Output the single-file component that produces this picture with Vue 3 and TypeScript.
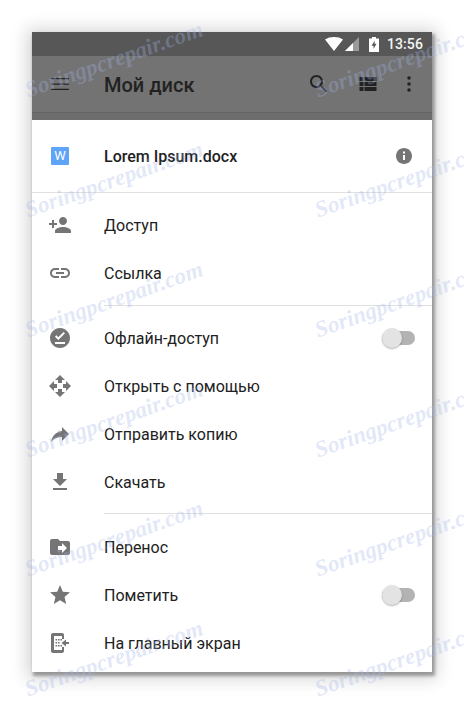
<script setup lang="ts">
const fileMenuA = [
  { label: 'Доступ', d: 'M15 12c2.21 0 4-1.79 4-4s-1.79-4-4-4-4 1.79-4 4 1.79 4 4 4zm-9-2V7H4v3H1v2h3v3h2v-3h3v-2H6zm9 4c-2.67 0-8 1.34-8 4v2h16v-2c0-2.66-5.33-4-8-4z' },
  { label: 'Ссылка', d: 'M3.9 12c0-1.71 1.39-3.1 3.1-3.1h4V7H7c-2.76 0-5 2.24-5 5s2.24 5 5 5h4v-1.9H7c-1.71 0-3.1-1.39-3.1-3.1zM8 13h8v-2H8v2zm9-6h-4v1.9h4c1.71 0 3.1 1.39 3.1 3.1s-1.39 3.1-3.1 3.1h-4V17h4c2.76 0 5-2.24 5-5s-2.24-5-5-5z' },
]
const fileMenuB = [
  { label: 'Офлайн-доступ', toggle: true, d: 'M12 2C6.5 2 2 6.5 2 12s4.5 10 10 10 10-4.5 10-10S17.5 2 12 2zm5 16H7v-2h10v2zm-6.7-4L7 10.7l1.4-1.4 1.9 1.9 5.3-5.3L17 7.3 10.3 14z' },
  { label: 'Открыть с помощью', toggle: false, d: 'M10 9h4V6h3l-5-5-5 5h3v3zm-1 1H6V7l-5 5 5 5v-3h3v-4zm14 2l-5-5v3h-3v4h3v3l5-5zm-9 3h-4v3H7l5 5 5-5h-3v-3z' },
  { label: 'Отправить копию', toggle: false, d: 'M14 9V5l7 7-7 7v-4.1c-5 0-8.5 1.6-11 5.1 1-5 4-10 11-11z' },
  { label: 'Скачать', toggle: false, d: 'M19 9h-4V3H9v6H5l7 7 7-7zM5 18v2h14v-2H5z' },
]
const fileMenuC = [
  { label: 'Перенос', toggle: false, d: 'M20 6h-8l-2-2H4c-1.1 0-2 .9-2 2v12c0 1.1.9 2 2 2h16c1.1 0 2-.9 2-2V8c0-1.1-.9-2-2-2zm-6 12v-3h-4v-4h4V8l5 5-5 5z' },
  { label: 'Пометить', toggle: true, d: 'M12 17.27L18.18 21l-1.64-7.03L22 9.24l-7.19-.61L12 2 9.19 8.63 2 9.24l5.46 4.73L5.82 21z' },
  { label: 'На главный экран', toggle: false, d: 'M5 2h9c1.100 0 2 .9 2 2v4h-2V5H6v14h8v-3h2v4c0 1.100-.9 2-2 2H5c-1.100 0-2-.9-2-2V4c0-1.100.9-2 2-2zm2.500 6h1.600v1.600H7.500zm2.500 0h1.600v1.600H10zm2.500 0h1.600v1.600h-1.600zM7.500 11h1.600v1.600H7.500zm2.500 0h1.600v1.600H10zM7.500 14h1.600v1.600H7.500zm2.500 0h1.600v1.600H10zm2.500 0h1.600v1.600h-1.600zM21 11v2h-3v2.500L13.500 12 18 8.500V11z' },
]
const rows = [60, 180, 300, 420, 539, 659]
const marks = [114, 404].flatMap((x) =>
  rows.map((y) => ({ left: `${x}px`, top: `${y}px` })),
)
</script>

<template>
  <div class="page">
    <div class="phone">
      <div class="status">
        <svg class="st-icon" width="18" height="14" viewBox="0 0 18 14"><path d="M0 2.500C2.500.8 5.600 0 9 0s6.500.8 9 2.500L9 14z" fill="#fff" /></svg>
        <svg class="st-icon" width="15" height="14" viewBox="0 0 15 14"><path d="M0 14L14 0v14z" fill="#9a9a9a" /><path d="M0 14L8 6v8z" fill="#fff" /></svg>
        <svg class="st-icon batt" width="10" height="15" viewBox="0 0 10 15"><path fill-rule="evenodd" d="M3 0h4v1.500h3V15H0V1.500h3zM5.800 3.500L2.500 8.800h2v3.200l3-5.300h-2z" fill="#fff" /></svg>
        <span class="time">13:56</span>
      </div>
      <div class="toolbar">
        <svg class="tb-menu" width="24" height="24" viewBox="0 0 24 24"><path d="M3 6h18v1.300H3zM3 11.400h18v1.300H3zM3 16.800h18v1.300H3z" fill="#222" /></svg>
        <span class="title">Мой диск</span>
        <svg class="tb-search" width="24" height="24" viewBox="0 0 24 24"><path d="M15.500 14h-.79l-.28-.27C15.410 12.590 16 11.110 16 9.500 16 5.910 13.090 3 9.500 3S3 5.910 3 9.500 5.910 16 9.500 16c1.610 0 3.090-.59 4.230-1.570l.27.28v.79l5 4.990L20.490 19l-4.990-5zm-6 0C7.010 14 5 11.990 5 9.500S7.010 5 9.500 5 14 7.010 14 9.500 11.990 14 9.500 14z" fill="#222" /></svg>
        <svg class="tb-list" width="24" height="24" viewBox="0 0 24 24"><path d="M3.500 5h4v4h-4zM8.500 5h12v4h-12zM3.500 10h4v4h-4zM8.500 10h12v4h-12zM3.500 15h4v4h-4zM8.500 15h12v4h-12z" fill="#222" /></svg>
        <svg class="tb-more" width="24" height="24" viewBox="0 0 24 24"><circle cx="12" cy="6" r="1.800" fill="#222" /><circle cx="12" cy="12" r="1.800" fill="#222" /><circle cx="12" cy="18" r="1.800" fill="#222" /></svg>
      </div>
      <div class="strip"></div>
      <div class="sheet">
        <div class="head">
          <div class="word">W</div>
          <span class="fname">Lorem Ipsum.docx</span>
          <svg class="info" width="24" height="24" viewBox="0 0 24 24"><path d="M12 4c-4.420 0-8 3.580-8 8s3.580 8 8 8 8-3.580 8-8-3.580-8-8-8zm1 12h-2v-5h2v5zm0-6.500h-2v-2h2v2z" fill="#757575" /></svg>
        </div>
        <div class="group first">
          <div v-for="r in fileMenuA" :key="r.label" class="row">
            <svg class="ic" width="24" height="24" viewBox="0 0 24 24"><path :d="r.d" fill="#757575" /></svg>
            <span>{{ r.label }}</span>
          </div>
        </div>
        <div class="group second">
          <div v-for="r in fileMenuB" :key="r.label" class="row">
            <svg class="ic" width="24" height="24" viewBox="0 0 24 24"><path :d="r.d" fill="#757575" /></svg>
            <span>{{ r.label }}</span>
            <div v-if="r.toggle" class="toggle"><i class="knob"></i></div>
          </div>
        </div>
        <div class="group third">
          <div v-for="r in fileMenuC" :key="r.label" class="row">
            <svg class="ic" width="24" height="24" viewBox="0 0 24 24"><path :d="r.d" fill="#757575" /></svg>
            <span>{{ r.label }}</span>
            <div v-if="r.toggle" class="toggle"><i class="knob"></i></div>
          </div>
        </div>
      </div>
    </div>
    <span v-for="(m, i) in marks" :key="i" class="mark" :style="m">Soringpcrepair.com</span>
  </div>
</template>

<style>
html, body { margin: 0; background: #fff; }
</style>

<style scoped>
.page {
  position: relative;
  width: 464px;
  height: 704px;
  overflow: hidden;
  padding: 32px;
  box-sizing: border-box;
  font-family: Roboto, "Noto Sans", sans-serif;
  background: #fff;
}
.phone {
  width: 400px;
  height: 640px;
  display: flex;
  flex-direction: column;
  box-shadow: 2px 3px 3px 1px rgba(0, 0, 0, .32), 0 2px 16px 5px rgba(0, 0, 0, .17);
}
.status {
  height: 24px;
  background: #575757;
  display: flex;
  align-items: center;
  justify-content: flex-end;
  padding-right: 9px;
  color: #f4f4f4;
}
.st-icon { margin-right: 2px; }
.batt { margin-left: 7px; margin-right: 8px; }
.time { font-size: 14px; font-weight: 500; letter-spacing: .1px; }
.toolbar {
  height: 56px;
  background: #737373;
  display: flex;
  align-items: center;
  color: #222;
}
.tb-menu { margin-left: 16px; }
.title { margin-left: 32px; font-size: 20px; font-weight: 500; flex: 1; position: relative; top: 1px; }
.tb-search { margin-right: 25px; }
.tb-list { margin-right: 17px; }
.tb-more { margin-right: 11px; }
.strip {
  height: 8px;
  background: #6d6d6d;
  border-top: 1px solid #636363;
  box-sizing: border-box;
}
.sheet { flex: 1; background: #fff; display: flex; flex-direction: column; }
.head {
  height: 72px;
  display: flex;
  align-items: center;
  border-bottom: 1px solid #e0e0e0;
  box-sizing: content-box;
}
.word {
  width: 18px;
  height: 18px;
  margin-left: 19px;
  background: #5ea5f8;
  border-radius: 1px;
  color: #fff;
  font-size: 13px;
  line-height: 18px;
  text-align: center;
}
.fname { margin-left: 35px; flex: 1; font-size: 16px; font-weight: 500; color: #212121; }
.info { margin-right: 16px; }
.group { display: flex; flex-direction: column; position: relative; }
.first { padding: 8px 0; }
.second { padding: 9px 0 7px; }
.first::after,
.second::after {
  content: "";
  position: absolute;
  left: 72px;
  right: 0;
  bottom: -1px;
  height: 1px;
  background: #e0e0e0;
}
.third { padding-top: 10px; }
.row {
  height: 48px;
  display: flex;
  align-items: center;
  position: relative;
  font-size: 16px;
  color: #212121;
}
.ic { margin-left: 16px; margin-right: 32px; flex: none; }
.toggle {
  position: absolute;
  right: 17px;
  top: 17px;
  width: 33px;
  height: 14px;
  border-radius: 7px;
  background: #b3b3b3;
}
.knob {
  position: absolute;
  left: 0;
  top: -3px;
  width: 20px;
  height: 20px;
  border-radius: 50%;
  background: #e3e3e3;
  box-shadow: 0 1px 2px rgba(0, 0, 0, .3);
}
.mark {
  position: absolute;
  transform: translate(-50%, -50%) rotate(-19.500deg);
  font-family: "Liberation Serif", serif;
  font-style: italic;
  font-weight: 700;
  font-size: 23px;
  white-space: nowrap;
  color: rgba(165, 182, 232, .32);
  pointer-events: none;
}
</style>
